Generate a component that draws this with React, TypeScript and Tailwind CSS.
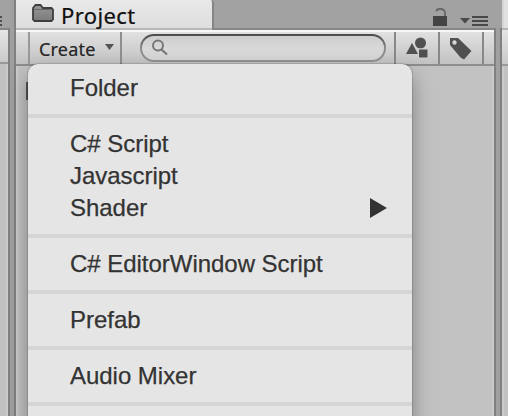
import React from "react";

const groups: { label: string; sub?: boolean }[][] = [
  [{ label: "Folder" }],
  [{ label: "C# Script" }, { label: "Javascript" }, { label: "Shader", sub: true }],
  [{ label: "C# EditorWindow Script" }],
  [{ label: "Prefab" }],
  [{ label: "Audio Mixer" }],
  [],
];

function CreateMenu() {
  return (
    <div className="absolute left-[12px] top-[64px] h-[380px] w-[384px] rounded-t-[10px] bg-[#e5e5e5] pt-2 shadow-[0_0_0_1px_rgba(0,0,0,0.12),0_10px_20px_rgba(0,0,0,0.36)]">
      {groups.map((items, i) => (
        <React.Fragment key={i}>
          {i > 0 && (
            <div className="py-[10px]">
              <div className="h-1 bg-[#d5d5d5]" />
            </div>
          )}
          {items.map((item) => (
            <div
              key={item.label}
              className="flex h-8 items-center justify-between pr-[25px] pl-[42px] font-['Liberation_Sans',Arial,sans-serif] text-[24px] leading-8 tracking-[-0.03px] whitespace-nowrap text-[#333] [-webkit-text-stroke:0.25px_#333]"
            >
              <span>{item.label}</span>
              {item.sub && (
                <svg width="17" height="20" viewBox="0 0 17 20">
                  <path d="M0 0 17 10 0 20Z" fill="#333" />
                </svg>
              )}
            </div>
          ))}
        </React.Fragment>
      ))}
    </div>
  );
}

function Tabs() {
  return (
    <div className="flex h-[28px] bg-[#a2a2a2]">
      <div className="flex w-[198px] items-center rounded-tr-[3px] border-r-2 border-[#858585] bg-linear-to-b from-[#e9e9e9] to-[#dedede] pl-4">
        <svg width="22" height="18" viewBox="0 0 22 18" className="relative -top-px">
          <defs>
            <linearGradient id="folder" x1="0" y1="0" x2="0" y2="1">
              <stop offset="0" stopColor="#979797" />
              <stop offset="1" stopColor="#7b7b7b" />
            </linearGradient>
          </defs>
          <path
            d="M1 15.500V4l2.500-3h5L11 4h8.500L21 5.500V15.500L19.500 17h-17Z"
            fill="url(#folder)"
            stroke="#3e3e3e"
            strokeWidth="1.800"
          />
          <path d="M2 5.500H20" stroke="#686868" />
        </svg>
        <span className="relative top-px ml-[7px] font-['Noto_Sans',sans-serif] text-[22px] leading-7 tracking-[0.4px] text-[#101010] [-webkit-text-stroke:0.2px_#101010]">
          Project
        </span>
      </div>
      <div className="flex flex-1 items-start justify-end pr-[6px]">
        <svg width="15" height="18" viewBox="0 0 15 18" className="mt-2">
          <path d="M3.500 3.500V2.500Q4 1 7 1q5 0 5 4v4" fill="none" stroke="#666" strokeWidth="1.800" />
          <path d="M0 8h14v10H0Z" fill="#444" />
        </svg>
        <svg width="28" height="11" viewBox="0 0 28 11" className="mt-[15px] ml-[12px]">
          <path d="M0 3h10L5 8.500Z" fill="#484848" />
          <path d="M12 2h16M12 6h16M12 10h16" stroke="#484848" strokeWidth="2" />
        </svg>
      </div>
    </div>
  );
}

function Toolbar() {
  return (
    <div className="flex h-[34px] border-b-2 border-[#8d8d8d] bg-linear-to-b from-[#e1e1e1] to-[#c2c2c2]">
      <div className="w-[14px] border-r-2 border-[#999]" />
      <div className="flex w-[92px] items-center border-r-2 border-[#8e8e8e] pl-[9px]">
        <span className="relative top-px font-['Noto_Sans',sans-serif] text-[18px] leading-8 tracking-[0.2px] text-[#252525] [-webkit-text-stroke:0.2px_#252525]">
          Create
        </span>
        <svg width="9" height="6" viewBox="0 0 9 6" className="relative -top-px ml-[9px]">
          <path d="M0 0h9L4.500 6Z" fill="#555" />
        </svg>
      </div>
      <div className="flex flex-1 items-start border-r-2 border-[#888] pt-[2px] pr-2 pl-[18px]">
        <div className="h-7 flex-1 rounded-full bg-linear-to-b from-[#484848] via-[#8a8a8a] to-[#929292] p-[2px]">
          <div className="flex h-6 items-center rounded-full bg-linear-to-b from-[#cdcdcd] via-[#d8d8d8] to-[#d5d5d5] pl-[9px]">
            <svg width="18" height="18" viewBox="0 0 18 18">
              <circle cx="7" cy="6.500" r="5" fill="none" stroke="#777" strokeWidth="2" />
              <path d="m10.500 10.500 5.500 5" stroke="#777" strokeWidth="2.200" />
            </svg>
          </div>
        </div>
      </div>
      <div className="flex w-[44px] border-r-2 border-[#888] pt-[5px] pl-[10px]">
        <svg width="23" height="22" viewBox="0 0 23 22">
          <circle cx="14.500" cy="6" r="5.500" fill="#505050" />
          <path d="M6 6 12 17H0Z" fill="#505050" />
          <path d="M12.500 12h9.500v9h-9.500Z" fill="#505050" stroke="#d0d0d0" />
        </svg>
      </div>
      <div className="flex w-[44px] border-r-2 border-[#888] pt-[5px] pl-[9px]">
        <svg width="24" height="24" viewBox="0 0 24 24">
          <path
            fillRule="evenodd"
            d="M1 1H9L22.500 14 15 22.500 11.500 20.500 1 8ZM5.500 3.300a2.200 2.200 0 1 0 0 4.400 2.200 2.200 0 0 0 0-4.400Z"
            fill="#505050"
          />
        </svg>
      </div>
      <div className="w-[10px]" />
    </div>
  );
}

export default function App() {
  return (
    <div className="flex h-[416px] w-[508px] overflow-hidden bg-[#a2a2a2]">
      <div className="flex w-[10px] flex-col">
        <div className="flex h-7 flex-col gap-[2px] bg-[#a2a2a2] pt-[16px]">
          <div className="h-[2px] w-[2px] bg-[#4c4c4c]" />
          <div className="h-[2px] w-[2px] bg-[#4c4c4c]" />
          <div className="h-[2px] w-[2px] bg-[#4c4c4c]" />
        </div>
        <div className="flex flex-1 flex-col border-r-2 border-[#808080] bg-[#c1c1c1]">
          <div className="h-[2px] bg-[#858585]" />
          <div className="h-[34px] border-b-2 border-[#999] bg-linear-to-b from-[#e5e5e5] to-[#c9c9c9]" />
          <div className="flex-1 border-r-2 border-[#cbcbcb]" />
        </div>
      </div>
      <div className="w-[4px] bg-[#9f9f9f]" />
      <div className="w-[2px] bg-[#808080]" />
      <div className="relative flex w-[478px] flex-col bg-[#c2c2c2]">
        <Tabs />
        <div className="flex h-[2px]">
          <div className="w-[196px] bg-[#b9b9b9]" />
          <div className="flex-1 bg-[#858585]" />
        </div>
        <div className="h-[2px] bg-[#f7f7f7]" />
        <Toolbar />
        <div className="flex flex-1 items-start border-x-2 border-[#cbcbcb]">
          <div className="mt-[16px] ml-[8px] h-[18px] w-[4px] bg-[#555]" />
        </div>
        <CreateMenu />
      </div>
      <div className="w-[8px] pt-[28px]">
        <div className="h-full border-x-2 border-[#808080] bg-[#a0a0a0]" />
      </div>
      <div className="flex flex-1 flex-col rounded-tl-[3px] bg-[#e1e1e1]">
        <div className="h-[28px] border-l-2 border-[#d5d5d5]" />
        <div className="h-[2px] bg-[#b5b5b5]" />
        <div className="h-[36px] border-b-2 border-[#999] bg-linear-to-b from-[#e5e5e5] to-[#c9c9c9]" />
        <div className="flex-1 border-l-2 border-[#cbcbcb] bg-[#c2c2c2]" />
      </div>
    </div>
  );
}
